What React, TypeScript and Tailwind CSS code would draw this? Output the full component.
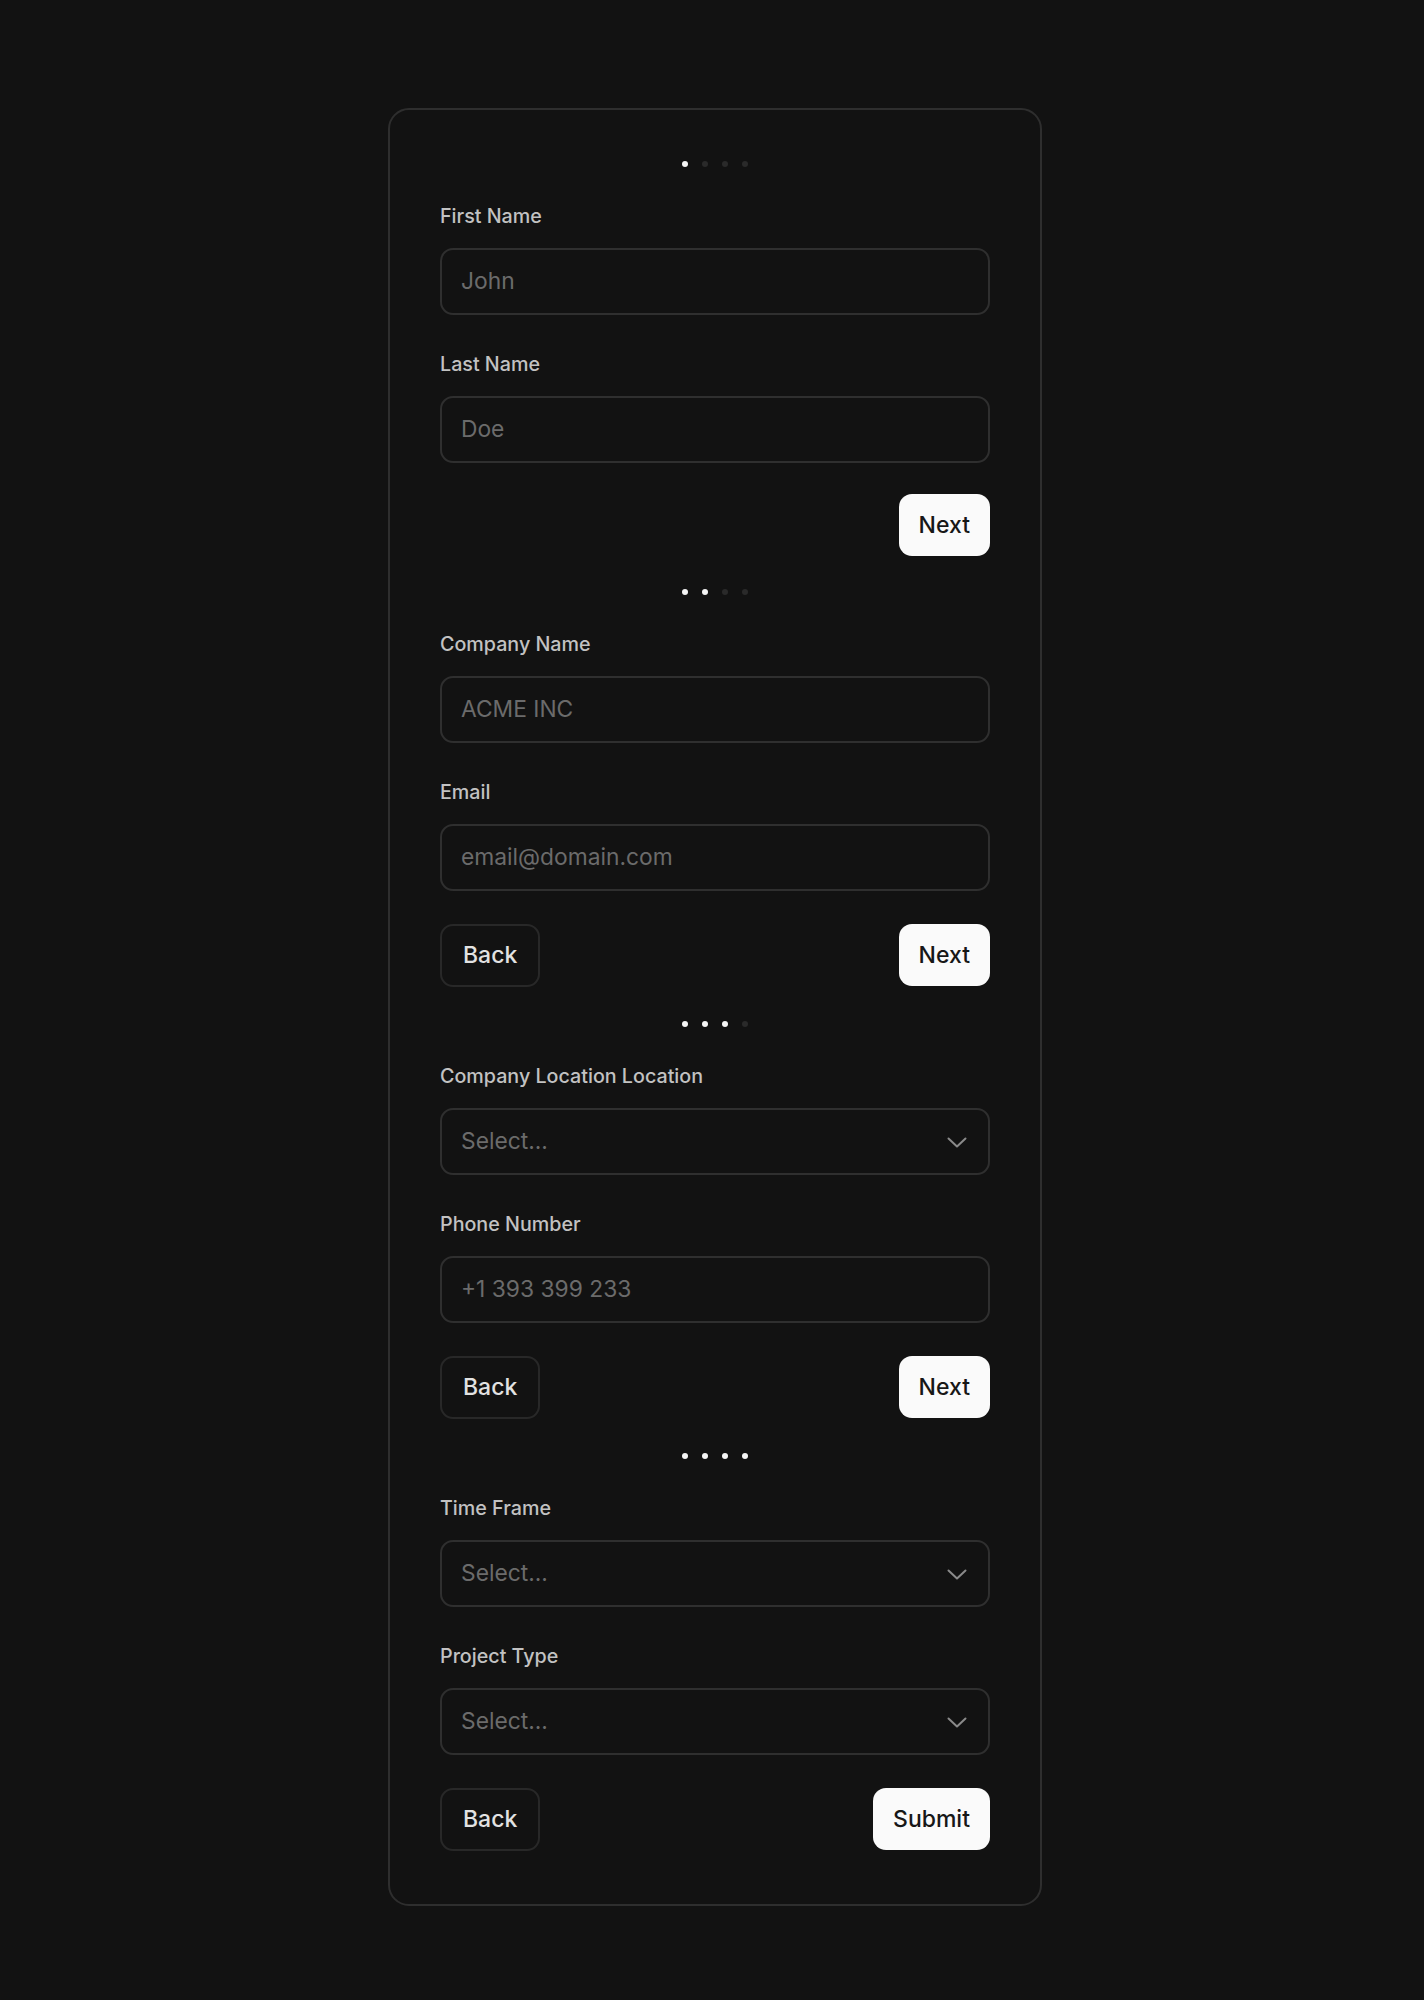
const font = { fontFamily: "Inter, 'Noto Sans', sans-serif" };

function Dots({ active }: { active: number }) {
  return (
    <div className="flex justify-center gap-[14px] h-[6px]">
      {[0, 1, 2, 3].map((i) => (
        <span
          key={i}
          className={
            i < active
              ? "w-[6px] h-[6px] rounded-full bg-[#f5f5f5]"
              : "w-[6px] h-[6px] rounded-full bg-[#2a2a2a]"
          }
        />
      ))}
    </div>
  );
}

function Chevron() {
  return (
    <svg width="20" height="20" viewBox="0 0 20 20" fill="none">
      <path
        d="M1.5 6.5 10 14.5 18.5 6.5"
        stroke="#8a8a8a"
        strokeWidth="2"
        strokeLinecap="round"
        strokeLinejoin="round"
      />
    </svg>
  );
}

function Field({
  label,
  placeholder,
  select,
}: {
  label: string;
  placeholder: string;
  select?: boolean;
}) {
  return (
    <div className="mt-[37px]">
      <label className="block text-[19.7px] leading-[24px] font-medium text-[#c2c2c2]">
        {label}
      </label>
      <div className="mt-[20px] h-[67px] rounded-[13px] border-2 border-[#2f2f2f] flex items-center justify-between pl-[19px] pr-[21px]">
        <span className="text-[22.8px] text-[#6b6b6b]">{placeholder}</span>
        {select && <Chevron />}
      </div>
    </div>
  );
}

function Buttons({
  back,
  label,
  className,
}: {
  back?: boolean;
  label: string;
  className: string;
}) {
  return (
    <div className={`flex items-center justify-between h-[62px] ${className}`}>
      {back ? (
        <button className="h-[63px] px-[21px] rounded-[13px] border-2 border-[#282828] text-[23px] font-medium text-[#e2e2e2]">
          Back
        </button>
      ) : (
        <span />
      )}
      <button className="h-[62px] px-[20px] rounded-[13px] bg-[#fafafa] text-[23px] font-medium text-[#171717]">
        {label}
      </button>
    </div>
  );
}

export default function App() {
  return (
    <div className="min-h-[2000px] bg-[#121212] pt-[108px] pl-[6px] flex justify-center" style={font}>
      <div className="w-[654px] h-fit rounded-[21px] border-2 border-[#2e2e2e] bg-[#121212] px-[50px] pt-[51px] pb-[54px]">
        {/* Step 1 */}
        <Dots active={1} />
        <Field label="First Name" placeholder="John" />
        <Field label="Last Name" placeholder="Doe" />
        <Buttons label="Next" className="mt-[31px] mb-[33px]" />

        {/* Step 2 */}
        <Dots active={2} />
        <Field label="Company Name" placeholder="ACME INC" />
        <Field label="Email" placeholder="email@domain.com" />
        <Buttons back label="Next" className="mt-[33px] mb-[35px]" />

        {/* Step 3 */}
        <Dots active={3} />
        <Field label="Company Location Location" placeholder="Select..." select />
        <Field label="Phone Number" placeholder="+1 393 399 233" />
        <Buttons back label="Next" className="mt-[33px] mb-[35px]" />

        {/* Step 4 */}
        <Dots active={4} />
        <Field label="Time Frame" placeholder="Select..." select />
        <Field label="Project Type" placeholder="Select..." select />
        <Buttons back label="Submit" className="mt-[33px]" />
      </div>
    </div>
  );
}
